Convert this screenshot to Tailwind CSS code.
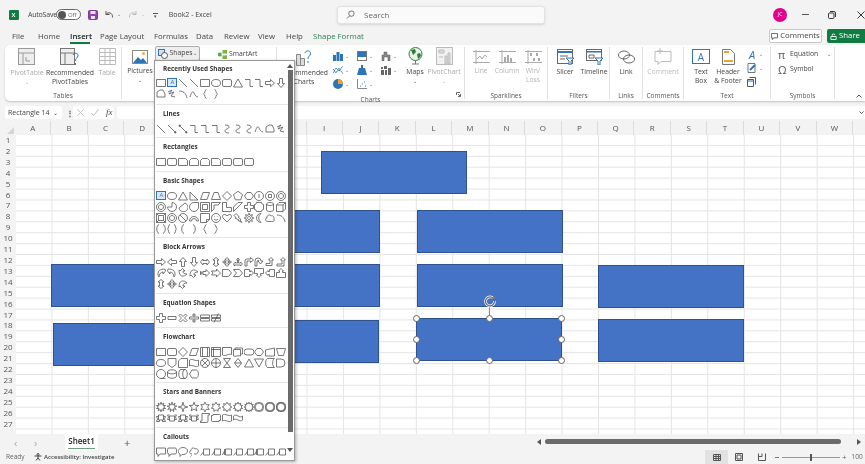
<!DOCTYPE html>
<html lang="en">
<head>
<meta charset="UTF-8" />
<title>Book2 - Excel</title>
<script src="https://cdn.jsdelivr.net/npm/@tailwindcss/browser@4"></script>
</head>
<body class="bg-[#f3f3f3]">
<div class="relative w-[865px] h-[464px] overflow-hidden bg-[#f3f3f3] text-[#444] font-['Open_Sans',sans-serif] text-[8px] leading-none flex flex-col blur-[0.3px]">

  <!-- title bar -->
  <div class="h-[29px] flex items-center shrink-0">
    <svg class="ml-[9px] w-[10px] h-[10px]" viewBox="0 0 10 10"><rect width="10" height="10" rx="1" fill="#107c41"/><path d="M3 3l3 4M6 3L3 7" stroke="#fff" fill="none"/></svg>
    <span class="ml-[9px] w-[28px] text-[7px] tracking-[-0.2px]">AutoSave</span>
    <div class="w-[25px] h-[11px] rounded-full border border-[#666] bg-white flex items-center px-[1px]">
      <span class="w-[8px] h-[8px] rounded-full bg-[#555]"></span><span class="ml-[2px] text-[6px] text-[#666]">Off</span>
    </div>
    <svg class="ml-[7px] w-[10px] h-[10px]" viewBox="0 0 10 10"><rect x=".5" y=".5" width="9" height="9" rx="1" fill="#8e44ad" stroke="#7a3a98"/><rect x="2.5" y="1" width="5" height="3" fill="#efe3f5"/><rect x="3" y="6" width="4" height="3" fill="#efe3f5"/></svg>
    <svg class="ml-[6px] w-[10px] h-[10px]" viewBox="0 0 10 10" fill="none" stroke="#555"><path d="M2 1v3.5h3.5M2 4.5c2-3 7-2 6.500 3"/></svg>
    <span class="ml-[3px] text-[5px] text-[#666]">⌄</span>
    <svg class="ml-[7px] w-[10px] h-[10px]" viewBox="0 0 10 10" fill="none" stroke="#bbb"><path d="M8 1v3.500H4.500M8 4.500c-2-3-7-2-6.500 3"/></svg>
    <span class="ml-[3px] text-[5px] text-[#bbb]">⌄</span>
    <span class="ml-[8px] w-[5px] h-[4px] border-t border-[#555] text-[5px] text-center text-[#555]">▾</span>
    <span class="ml-[11px] w-[129px] text-[7px]">Book2 - Excel</span>
    <div class="ml-[40px] w-[209px] h-[18px] bg-[#fafafa] border border-[#e2e2e2] rounded-[3px] flex items-center shadow-sm">
      <svg class="ml-[8px] w-[9px] h-[9px]" viewBox="0 0 10 10" fill="none" stroke="#666"><circle cx="6" cy="4" r="3"/><path d="M4 6.500L1 9.500"/></svg>
      <span class="ml-[9px] text-[8px] text-[#666]">Search</span>
    </div>
    <div class="ml-[228px] w-[14px] h-[14px] rounded-full bg-[#e3008c] text-white text-[5px] flex items-center justify-center">JC</div>
    <span class="ml-[15px] w-[7px] border-t border-[#555]"></span>
    <svg class="ml-[19px] w-[8px] h-[8px]" viewBox="0 0 8 8" fill="none" stroke="#333"><rect x=".5" y="2" width="5.500" height="5.500" rx="1"/><path d="M2 .5h4a1.500 1.500 0 0 1 1.500 1.500v4"/></svg>
    <svg class="ml-[21px] w-[8px] h-[8px]" viewBox="0 0 8 8" fill="none" stroke="#333"><path d="M.5 .5l7 7M7.500 .5l-7 7"/></svg>
  </div>

  <!-- tabs -->
  <div class="h-[16px] shrink-0 flex items-center pl-[12px] text-[7.800px] relative">
    <span class="w-[26px]">File</span>
    <span class="w-[32px]">Home</span>
    <span class="w-[30px] font-semibold text-[#222] h-[16px] leading-[14px] relative">Insert<span class="absolute left-0 w-[20px] bottom-[1px] h-[2px] bg-[#107c41]"></span></span>
    <span class="w-[54px]">Page Layout</span>
    <span class="w-[42px]">Formulas</span>
    <span class="w-[28px]">Data</span>
    <span class="w-[34px]">Review</span>
    <span class="w-[28px]">View</span>
    <span class="w-[27px]">Help</span>
    <span class="text-[#2e7d55]">Shape Format</span>
    <div class="ml-auto mr-[5px] w-[53px] h-[14px] -mt-[2px] bg-white border border-[#c8c8c8] rounded-[2px] flex items-center justify-center">
      <svg class="w-[7px] h-[7px] mr-[2px]" viewBox="0 0 8 8" fill="none" stroke="#555"><path d="M.5 .5h7v5H3L1.500 7.500v-2h-1z"/></svg>Comments
    </div>
    <div class="w-[38px] h-[14px] -mt-[2px] bg-[#107c41] rounded-l-[2px] text-white flex items-center pl-[3px]">
      <svg class="w-[7px] h-[7px] mr-[2px]" viewBox="0 0 8 8" fill="none" stroke="#fff"><path d="M1 4h6v3.500H1zM2.500 4V2.500a1.500 1.500 0 0 1 3 0"/></svg>Share
    </div>
  </div>

  <!-- ribbon -->
  <div class="h-[56px] shrink-0 ml-[5px] bg-white rounded-l-[5px] shadow-[0_1px_2px_rgba(0,0,0,0.2)] flex text-[6.800px] text-[#555] text-center">
    <!-- Tables -->
    <div class="w-[117px] flex flex-col border-r border-[#e0e0e0] my-[2px]">
      <div class="flex-1 flex pl-[3px] pt-[1px]">
        <div class="w-[38px] flex flex-col items-center text-[#aaa]">
          <svg class="w-[18px] h-[18px]" viewBox="0 0 18 18" fill="#eee" stroke="#999"><rect x=".5" y=".5" width="16" height="16"/><path d="M.5 5h16M5 5v12M8 9v4h4" fill="none"/></svg>
          <span class="mt-[4px]">PivotTable</span><span class="mt-[3px] text-[5px]">⌄</span>
        </div>
        <div class="w-[48px] flex flex-col items-center text-[#444]">
          <svg class="w-[20px] h-[18px]" viewBox="0 0 20 18" fill="none" stroke="#777"><rect x=".5" y=".5" width="14" height="16" fill="#eee"/><path d="M.5 5h14M5 5v12"/><path d="M13 7c1-3 6-2 5 1-.5 2-2.500 2-2.500 5M15.500 15v2" stroke="#2e75b6"/></svg>
          <span class="mt-[4px] whitespace-nowrap">Recommended</span><span class="mt-[2px]">PivotTables</span>
        </div>
        <div class="w-[26px] flex flex-col items-center text-[#aaa]">
          <svg class="w-[17px] h-[17px]" viewBox="0 0 17 17" fill="none" stroke="#bbb"><path d="M.5 .5h16v16H.5zM.5 4.500h16M.5 8.500h16M.5 12.500h16M6 .5v16M11 .5v16"/></svg>
          <span class="mt-[5px]">Table</span>
        </div>
      </div>
      <span class="h-[12px] leading-[17px] text-[6.500px]">Tables</span>
    </div>
    <!-- Illustrations, mostly under the open menu -->
    <div class="w-[155px] flex flex-col border-r border-[#e0e0e0] my-[2px]">
      <div class="flex-1 flex">
        <div class="ml-[3px] w-[30px] flex flex-col items-center text-[#444] pt-[3px]">
          <svg class="w-[16px] h-[14px]" viewBox="0 0 16 14"><rect x=".5" y=".5" width="15" height="13" fill="#fff" stroke="#888"/><path d="M1 13l5-6 3 3 2-2 4 5z" fill="#2e75b6"/><circle cx="11.500" cy="3.500" r="1.500" fill="#f0b429"/></svg>
          <span class="mt-[4px]">Pictures</span><span class="mt-[3px] text-[5px]">⌄</span>
        </div>
        <div class="w-[45px] h-[15px] -mt-[1px] border border-[#aaa] bg-[#eee] rounded-[2px] flex items-center justify-center text-[#444]">
          <svg class="w-[10px] h-[10px] mr-[2px]" viewBox="0 0 10 10" fill="none" stroke="#2e75b6"><rect x=".5" y=".5" width="6" height="6" fill="#cfe2f3"/><circle cx="6.500" cy="6.500" r="3" fill="#fff" stroke="#555"/></svg>Shapes <span class="ml-[1px] text-[5px]">⌄</span>
        </div>
        <div class="ml-[18px] h-[14px] flex items-center text-[#444]">
          <svg class="w-[9px] h-[9px] mr-[2px]" viewBox="0 0 10 10"><rect x="0" y="3" width="4" height="4" fill="#4caf50"/><rect x="5" y="0" width="5" height="4" fill="#7cb342"/><rect x="5" y="6" width="5" height="4" fill="#7cb342"/></svg>SmartArt
        </div>
      </div>
      <span class="h-[12px]"></span>
    </div>
    <!-- Charts -->
    <div class="w-[188px] flex flex-col border-r border-[#e0e0e0] my-[2px] relative">
      <div class="flex-1 flex">
        <div class="w-[54px] flex flex-col items-center text-[#444] pt-[2px]">
          <svg class="w-[16px] h-[17px]" viewBox="0 0 16 17" fill="none" stroke="#888"><path d="M.5 5.500h4v11h-4zM4.500 9.500h4v7h-4z" fill="#ddd"/><path d="M9 4c.5-3 6-3 5.500 1-.2 2-2.500 2-2.500 5M12 12v2" stroke="#2e75b6"/></svg>
          <span class="mt-[4px] whitespace-nowrap">Recommended</span><span class="mt-[2px]">Charts</span>
        </div>
        <div class="w-[72px] grid grid-cols-3 auto-rows-[14px] pt-[2px] text-[5px] text-[#666]">
          <div class="flex items-center pl-[2px]"><svg class="w-[10px] h-[10px] mr-[2px]" viewBox="0 0 10 10" fill="#2e75b6"><path d="M0 4h3v6H0zM3.500 1h3v9h-3zM7 3h3v7H7z"/></svg>⌄</div>
          <div class="flex items-center pl-[2px]"><svg class="w-[10px] h-[10px] mr-[2px]" viewBox="0 0 10 10"><rect x=".5" y=".5" width="9" height="9" fill="#fff" stroke="#777"/><path d="M1 1h8v5H1z" fill="#2e75b6"/></svg>⌄</div>
          <div class="flex items-center pl-[2px]"><svg class="w-[10px] h-[10px] mr-[2px]" viewBox="0 0 10 10" fill="#888" stroke="#555" stroke-width=".5"><path d="M1 10V4h2V1h3v3h3v6H7V6H3v4z"/></svg>⌄</div>
          <div class="flex items-center pl-[2px]"><svg class="w-[10px] h-[10px] mr-[2px]" viewBox="0 0 10 10" fill="none" stroke="#2e75b6"><path d="M0 8l3-5 3 3 4-5M0 4l3 4 3-5 4 6" stroke-dasharray="1.500 .5"/></svg>⌄</div>
          <div class="flex items-center pl-[2px]"><svg class="w-[10px] h-[10px] mr-[2px]" viewBox="0 0 10 10" fill="#2e75b6"><path d="M4 0h2v3h2l2 7H0l2-7h2z"/></svg>⌄</div>
          <div class="flex items-center pl-[2px]"><svg class="w-[10px] h-[10px] mr-[2px]" viewBox="0 0 10 10" fill="#666"><path d="M0 2h2v2H0zM3 1h3v3H3zM0 5h3v5H0zM4 5h2v5H4zM7 3h3v7H7z"/></svg>⌄</div>
          <div class="flex items-center pl-[2px]"><svg class="w-[10px] h-[10px] mr-[2px]" viewBox="0 0 10 10"><circle cx="5" cy="5" r="5" fill="#2e75b6"/><path d="M5 5V0a5 5 0 0 1 5 5z" fill="#f0a030"/></svg>⌄</div>
          <div class="flex items-center pl-[2px]"><svg class="w-[10px] h-[10px] mr-[2px]" viewBox="0 0 10 10" fill="none" stroke="#888"><path d="M.5 0v9.500H10"/><path d="M3 7h1M5 5h1M7 3h1M8 7h1" stroke="#2e75b6"/></svg>⌄</div>
        </div>
        <div class="w-[24px] flex flex-col items-center text-[#444]">
          <svg class="w-[15px] h-[18px]" viewBox="0 0 15 18"><circle cx="7.500" cy="7" r="6.500" fill="#e8f2e8" stroke="#3a7d44"/><path d="M3 3l4-1 1 3-3 3zM9 7l3-1 1 3-3 3z" fill="#2e7d32"/><path d="M4 17h7M7.500 13.500V17" stroke="#777" fill="none"/></svg>
          <span class="mt-[4px]">Maps</span><span class="mt-[3px] text-[5px]">⌄</span>
        </div>
        <div class="w-[34px] flex flex-col items-center text-[#aaa]">
          <svg class="w-[17px] h-[18px]" viewBox="0 0 17 18" fill="#ddd" stroke="#bbb"><rect x=".5" y=".5" width="16" height="17" fill="#f2f2f2"/><path d="M3 3h5v3H3zM9 9h2v8H9zM12 6h2v11h-2zM3 10h4" /></svg>
          <span class="mt-[4px]">PivotChart</span><span class="mt-[3px] text-[5px]">⌄</span>
        </div>
      </div>
      <span class="h-[12px] leading-[17px] text-[6.500px]">Charts</span>
      <svg class="absolute right-[3px] bottom-[2px] w-[5px] h-[5px]" viewBox="0 0 5 5" fill="none" stroke="#666"><path d="M.5 3V.5H4M2 2l2.500 2.500M4.500 2v2.500H2"/></svg>
    </div>
    <!-- Sparklines -->
    <div class="w-[83px] flex flex-col border-r border-[#e0e0e0] my-[2px]">
      <div class="flex-1 flex pl-[3px] pt-[3px] text-[#b5b5b5]">
        <div class="w-[26px] flex flex-col items-center"><svg class="w-[17px] h-[14px]" viewBox="0 0 17 14" fill="none" stroke="#aaa"><path d="M0 1.500h17M0 12.500h17M3 0v14"/><path d="M4 9l3-3 2 3 3-4 2 2"/></svg><span class="mt-[4px]">Line</span></div>
        <div class="w-[26px] flex flex-col items-center"><svg class="w-[17px] h-[14px]" viewBox="0 0 17 14" fill="none" stroke="#aaa"><path d="M0 1.500h17M0 12.500h17M3 0v14"/><path d="M6 12V7M9 12V5M12 12V8" stroke-width="2"/></svg><span class="mt-[4px]">Column</span></div>
        <div class="w-[26px] flex flex-col items-center"><svg class="w-[17px] h-[14px]" viewBox="0 0 17 14" fill="none" stroke="#aaa"><path d="M0 1.500h17M0 12.500h17M3 0v14"/><path d="M6 6V3M9 11V8M12 6V3M14 11V8" stroke-width="2"/></svg><span class="mt-[4px]">Win/</span><span class="mt-[2px]">Loss</span></div>
      </div>
      <span class="h-[12px] leading-[17px] text-[6.500px]">Sparklines</span>
    </div>
    <!-- Filters -->
    <div class="w-[62px] flex flex-col border-r border-[#e0e0e0] my-[2px]">
      <div class="flex-1 flex pl-[2px] pt-[2px] text-[#444]">
        <div class="w-[30px] flex flex-col items-center"><svg class="w-[17px] h-[16px]" viewBox="0 0 17 16" fill="none" stroke="#666"><rect x=".5" y=".5" width="15" height="14"/><path d="M1 2h14v2H1z" fill="#2e75b6" stroke="none"/><path d="M3 7h8M3 10h5"/><path d="M9 9h8l-3 3v4h-2v-4z" fill="#fff" stroke="#2e75b6"/></svg><span class="mt-[4px]">Slicer</span></div>
        <div class="w-[28px] flex flex-col items-center"><svg class="w-[17px] h-[16px]" viewBox="0 0 17 16" fill="none" stroke="#666"><rect x=".5" y=".5" width="15" height="11"/><path d="M1 2h14v1.500H1z" fill="#2e75b6" stroke="none"/><path d="M3 6h5v3H3z"/><path d="M9 9h8l-3 3v4h-2v-4z" fill="#fff" stroke="#2e75b6"/></svg><span class="mt-[4px]">Timeline</span></div>
      </div>
      <span class="h-[12px] leading-[17px] text-[6.500px]">Filters</span>
    </div>
    <!-- Links -->
    <div class="w-[33px] flex flex-col border-r border-[#e0e0e0] my-[2px]">
      <div class="flex-1 flex flex-col items-center pt-[2px] text-[#444]"><svg class="w-[17px] h-[16px]" viewBox="0 0 17 16" fill="none" stroke="#666"><ellipse cx="6" cy="6" rx="5.500" ry="4"/><ellipse cx="11" cy="10" rx="5.500" ry="4"/></svg><span class="mt-[4px]">Link</span></div>
      <span class="h-[12px] leading-[17px] text-[6.500px]">Links</span>
    </div>
    <!-- Comments -->
    <div class="w-[41px] flex flex-col border-r border-[#e0e0e0] my-[2px]">
      <div class="flex-1 flex flex-col items-center pt-[1px] text-[#bbb]"><svg class="w-[18px] h-[17px]" viewBox="0 0 18 17" fill="none" stroke="#bbb"><path d="M1 3.500h16v10H7l-3 3v-3H1zM6 0v6M3 3h6"/></svg><span class="mt-[4px]">Comment</span></div>
      <span class="h-[12px] leading-[17px] text-[6.500px]">Comments</span>
    </div>
    <!-- Text -->
    <div class="w-[87px] flex flex-col border-r border-[#e0e0e0] my-[2px]">
      <div class="flex-1 flex pl-[4px] pt-[2px] text-[#444]">
        <div class="w-[26px] flex flex-col items-center">
          <div class="w-[18px] h-[15px] border border-[#2e75b6] flex items-center justify-center text-[10px] text-[#2e75b6]">A</div>
          <span class="mt-[5px]">Text</span><span class="mt-[2px]">Box</span>
        </div>
        <div class="w-[28px] flex flex-col items-center">
          <svg class="w-[13px] h-[16px]" viewBox="0 0 13 16"><path d="M.5 .5h8l4 4v11H.5z" fill="#fff" stroke="#777"/><path d="M2 2h5v2H2zM2 11h9v2H2z" fill="#e9a23b"/></svg>
          <span class="mt-[4px]">Header</span><span class="mt-[2px] whitespace-nowrap">&amp; Footer</span>
        </div>
        <div class="ml-[5px] flex flex-col gap-[4px] text-[5px] text-[#666]">
          <div class="flex items-center h-[10px]"><span class="w-[10px] text-[11px] italic text-[#2e75b6]">A</span><span class="ml-[2px]">⌄</span></div>
          <div class="flex items-center h-[10px]"><svg class="w-[10px] h-[10px]" viewBox="0 0 10 10" fill="none" stroke="#2e75b6"><path d="M1 .5h7v9H1z" stroke="#777"/><path d="M3 7l5-5" stroke-width="2"/></svg><span class="ml-[2px]">⌄</span></div>
          <svg class="w-[9px] h-[10px]" viewBox="0 0 9 10" fill="none" stroke="#555"><path d="M.5 2.500h6v7h-6zM2.500 .5h6v7"/><path d="M1 4h5" stroke="#2e75b6"/></svg>
        </div>
      </div>
      <span class="h-[12px] leading-[17px] text-[6.500px]">Text</span>
    </div>
    <!-- Symbols -->
    <div class="w-[64px] flex flex-col border-r border-[#e0e0e0] my-[2px]">
      <div class="flex-1 flex flex-col pl-[7px] text-[#444] text-left">
        <div class="h-[14px] flex items-center"><span class="w-[12px] text-[11px] text-[#555]">π</span>Equation<span class="ml-[9px] text-[5px]">⌄</span></div>
        <div class="mt-[1px] h-[14px] flex items-center"><span class="w-[12px] text-[11px] text-[#555]">Ω</span>Symbol</div>
      </div>
      <span class="h-[12px] leading-[17px] text-[6.500px]">Symbols</span>
    </div>
    <div class="flex-1 flex items-end justify-end pr-[3px] pb-[3px]">
      <svg class="w-[6px] h-[4px]" viewBox="0 0 6 4" fill="none" stroke="#555"><path d="M.5 3.500L3 1l2.500 2.500"/></svg>
    </div>
  </div>

  <!-- formula bar -->
  <div class="h-[20px] shrink-0 flex items-center pl-[5px] pt-[3px]">
    <div class="w-[57px] h-[13px] bg-white rounded-[2px] flex items-center pl-[3px] text-[7px] whitespace-nowrap">Rectangle 14<span class="ml-[3px] text-[6px]">⌄</span></div>
    <span class="ml-[4px] w-[3px] text-[8px] font-bold text-[#555]">⋮</span>
    <div class="ml-[4px] w-[41px] h-[13px] bg-white rounded-[2px] flex items-center pl-[4px] gap-[7px]">
      <svg class="w-[7px] h-[7px]" viewBox="0 0 8 8" fill="none" stroke="#bbb"><path d="M.5 .5l7 7M7.500 .5l-7 7"/></svg>
      <svg class="w-[8px] h-[7px]" viewBox="0 0 8 7" fill="none" stroke="#bbb"><path d="M.5 4l2 2.500 5-6"/></svg>
      <span class="font-['Liberation_Serif',serif] italic text-[9px] text-[#444]">fx</span>
    </div>
    <div class="ml-[3px] flex-1 h-[13px] bg-white rounded-l-[2px] flex items-center justify-end pr-[1px]">
      <svg class="w-[5px] h-[3px]" viewBox="0 0 5 3" fill="none" stroke="#555"><path d="M.5 .5L2.500 2.500 4.500 .5"/></svg>
    </div>
  </div>

  <!-- column headers -->
  <div class="h-[14px] shrink-0 flex items-center text-[8px] text-[#555]">
    <div class="w-[15px] h-full flex items-end justify-end pb-[1px] pr-[1px]"><span class="w-0 h-0 border-l-[7px] border-l-transparent border-b-[7px] border-b-[#d6d6d6]"></span></div>
    <div class="flex" id="cols"></div>
  </div>

  <!-- sheet -->
  <div class="flex-1 flex min-h-0">
    <div class="w-[16px] shrink-0 overflow-hidden text-center text-[8px] text-[#555]" id="rows"></div>
    <div class="relative flex-1 bg-white bg-[linear-gradient(to_right,#e4e4e4_1px,transparent_1px),linear-gradient(to_bottom,#e4e4e4_1px,transparent_1px)] bg-[size:36.45px_10.92px] bg-[position:-1px_-1px]">
      <div class="absolute left-[305px] top-[16px] w-[146px] h-[43px] bg-[#4472c4] border border-[#2f528f]"></div>
      <div class="absolute left-[218px] top-[75px] w-[146px] h-[43px] bg-[#4472c4] border border-[#2f528f]"></div>
      <div class="absolute left-[401px] top-[75px] w-[146px] h-[43px] bg-[#4472c4] border border-[#2f528f]"></div>
      <div class="absolute left-[35px] top-[129px] w-[146px] h-[43px] bg-[#4472c4] border border-[#2f528f]"></div>
      <div class="absolute left-[218px] top-[129px] w-[146px] h-[43px] bg-[#4472c4] border border-[#2f528f]"></div>
      <div class="absolute left-[401px] top-[129px] w-[146px] h-[43px] bg-[#4472c4] border border-[#2f528f]"></div>
      <div class="absolute left-[582px] top-[130px] w-[146px] h-[43px] bg-[#4472c4] border border-[#2f528f]"></div>
      <div class="absolute left-[37px] top-[188px] w-[146px] h-[43px] bg-[#4472c4] border border-[#2f528f]"></div>
      <div class="absolute left-[217px] top-[185px] w-[146px] h-[43px] bg-[#4472c4] border border-[#2f528f]"></div>
      <div class="absolute left-[582px] top-[184px] w-[146px] h-[43px] bg-[#4472c4] border border-[#2f528f]"></div>
      <!-- selected shape -->
      <div class="absolute left-[400px] top-[183px] w-[146px] h-[43px] bg-[#4472c4] border border-[#2f528f]">
        <span class="absolute left-[-4px] top-[-4px] w-[7px] h-[7px] rounded-full bg-white border border-[#666]"></span>
        <span class="absolute left-[69px] top-[-4px] w-[7px] h-[7px] rounded-full bg-white border border-[#666]"></span>
        <span class="absolute right-[-4px] top-[-4px] w-[7px] h-[7px] rounded-full bg-white border border-[#666]"></span>
        <span class="absolute left-[-4px] top-[17px] w-[7px] h-[7px] rounded-full bg-white border border-[#666]"></span>
        <span class="absolute right-[-4px] top-[17px] w-[7px] h-[7px] rounded-full bg-white border border-[#666]"></span>
        <span class="absolute left-[-4px] bottom-[-4px] w-[7px] h-[7px] rounded-full bg-white border border-[#666]"></span>
        <span class="absolute left-[69px] bottom-[-4px] w-[7px] h-[7px] rounded-full bg-white border border-[#666]"></span>
        <span class="absolute right-[-4px] bottom-[-4px] w-[7px] h-[7px] rounded-full bg-white border border-[#666]"></span>
        <span class="absolute left-[72px] top-[-14px] w-[1px] h-[11px] bg-[#888]"></span>
        <svg class="absolute left-[66px] top-[-25px] w-[14px] h-[14px]" viewBox="0 0 14 14" fill="none"><path d="M10.500 4.500A4.500 4.500 0 1 0 11.500 7" stroke="#fff" stroke-width="2.600"/><path d="M10.500 4.500A4.500 4.500 0 1 0 11.500 7" stroke="#666" stroke-width="1.200"/><path d="M11 1.500v3.500H7.500" stroke="#666"/></svg>
      </div>
    </div>
  </div>

  <!-- sheet tabs -->
  <div class="h-[16px] shrink-0 flex items-center relative text-[8px]">
    <span class="ml-[14px] w-[20px] text-[11px] text-[#aaa]">‹</span>
    <span class="w-[31px] text-[11px] text-[#aaa]">›</span>
    <div class="w-[33px] h-[16px] bg-white font-semibold text-[#222] text-center leading-[13px] relative">Sheet1<span class="absolute left-[3px] right-[3px] bottom-[1px] h-[1px] bg-[#6d9e84]"></span></div>
    <span class="ml-[26px] text-[11px] text-[#555]">+</span>
    <svg class="absolute left-[537px] top-[5px] w-[4px] h-[6px]" viewBox="0 0 4 6" fill="#555"><path d="M4 0v6L0 3z"/></svg>
    <div class="absolute left-[545px] top-[5px] w-[296px] h-[5px] rounded-full bg-[#6a6a6a]"></div>
    <svg class="absolute left-[857px] top-[5px] w-[4px] h-[6px]" viewBox="0 0 4 6" fill="#555"><path d="M0 0v6l4-3z"/></svg>
  </div>

  <!-- status bar -->
  <div class="h-[14px] shrink-0 flex items-center text-[6.500px] text-[#666] whitespace-nowrap">
    <span class="ml-[6px] w-[28px]">Ready</span>
    <svg class="w-[8px] h-[8px] mr-[2px]" viewBox="0 0 8 8" fill="none" stroke="#444"><circle cx="4" cy="1.500" r="1"/><path d="M.5 3h7M4 3v2L2 7.500M4 5l2 2.500"/></svg>
    <span class="w-[71px] font-semibold text-[#444] text-[6px]">Accessibility: Investigate</span>
    <div class="ml-[590px] w-[23px] h-[14px] bg-[#e2e2e2] flex items-center justify-center shrink-0">
      <svg class="w-[8px] h-[7px]" viewBox="0 0 8 7" fill="none" stroke="#555"><path d="M.5 .5h7v6h-7zM.5 2.500h7M.5 4.500h7M3 .5v6M5.500 .5v6"/></svg>
    </div>
    <svg class="ml-[7px] w-[8px] h-[8px] shrink-0" viewBox="0 0 8 8" fill="none" stroke="#555"><path d="M.5 .5h7v7h-7zM2 2h4v4H2z"/></svg>
    <svg class="ml-[15px] w-[8px] h-[8px] shrink-0" viewBox="0 0 8 8" fill="none" stroke="#555"><path d="M.5 .5v7h7v-7M4 .5v3H.5"/></svg>
    <span class="ml-[9px] w-[4px] border-t border-[#777] shrink-0"></span>
    <div class="ml-[3px] w-[58px] border-t border-[#999] relative shrink-0"><span class="absolute left-[28px] top-[-4px] w-[2px] h-[7px] bg-[#555]"></span></div>
    <span class="ml-[2px] text-[8px]">+</span>
    <span class="ml-[5px]">100</span>
  </div>

  <!-- shapes menu -->
  <div class="absolute left-[154px] top-[60px] w-[141px] h-[401px] bg-white border border-[#999] shadow-[1px_1px_3px_rgba(0,0,0,0.3)] pl-[1px]">
    <div class="w-[133px] text-[#333]">
      <section class="h-[44px] border-b border-[#e6e6e6]">
        <h4 class="h-[16px] pl-[7px] flex items-center font-bold text-[6.400px]">Recently Used Shapes</h4>
        <div data-shapes="rect tbox line line rect ell rnd tri elb elb rar dar free scr arc crv lbr rbr"></div>
      </section>
      <section class="h-[33px] border-b border-[#e6e6e6]">
        <h4 class="h-[18px] pl-[7px] flex items-center font-bold text-[6.400px]">Lines</h4>
        <div data-shapes="line lna lnd elb elb elb crs crs crs crv free scr"></div>
      </section>
      <section class="h-[34px] border-b border-[#e6e6e6]">
        <h4 class="h-[18px] pl-[7px] flex items-center font-bold text-[6.400px]">Rectangles</h4>
        <div data-shapes="rect rnd snip snp2 snp2 snip rnd rnd rnd"></div>
      </section>
      <section class="h-[66px] border-b border-[#e6e6e6]">
        <h4 class="h-[18px] pl-[7px] flex items-center font-bold text-[6.400px]">Basic Shapes</h4>
        <div data-shapes="tbox ell tri rtri para trap dia pent hex hept oct dec don pie chord tear frame half lsh diag cross plaq can cube bevel don nos bla fold smi heart bolt sun moon cloud arc dbk dbr lbk rbk lbr rbr"></div>
      </section>
      <section class="h-[56px] border-b border-[#e6e6e6]">
        <h4 class="h-[18px] pl-[7px] flex items-center font-bold text-[6.400px]">Block Arrows</h4>
        <div data-shapes="rar lar uar dar lrar udar quad lur bent uturn lup bup curR curL curU curD str notch pentR chev rcal dcal lcal ucal udar quad curD"></div>
      </section>
      <section class="h-[34px] border-b border-[#e6e6e6]">
        <h4 class="h-[18px] pl-[7px] flex items-center font-bold text-[6.400px]">Equation Shapes</h4>
        <div data-shapes="cross minus mul div eq neq"></div>
      </section>
      <section class="h-[55px] border-b border-[#e6e6e6]">
        <h4 class="h-[18px] pl-[7px] flex items-center font-bold text-[6.400px]">Flowchart</h4>
        <div data-shapes="rect rnd dia para predef inter doc multi term prep minp mop ell offp card tape sumj orj coll sort tri tridn stor delay seq mag drum disp"></div>
      </section>
      <section class="h-[45px] border-b border-[#e6e6e6]">
        <h4 class="h-[18px] pl-[7px] flex items-center font-bold text-[6.400px]">Stars and Banners</h4>
        <div data-shapes="exp1 exp2 st4 st5 st6 st7 st8 st10 st12 st16 st24 st32 rib rib2 rib rib2 scrl scrh wave dwav"></div>
      </section>
      <section>
        <h4 class="h-[18px] pl-[7px] flex items-center font-bold text-[6.400px]">Callouts</h4>
        <div data-shapes="rcl rrcl ocl ccl ln1 ln2 ln3 ln1 ln2 ln3 ln1 ln2"></div>
      </section>
    </div>
    <!-- menu scrollbar -->
    <div class="absolute right-[1px] top-0 bottom-0 w-[6px] flex flex-col items-center">
      <span class="mt-[3px] w-0 h-0 border-x-[3px] border-x-transparent border-b-[4px] border-b-[#555]"></span>
      <span class="mt-[2px] w-[5px] h-[362px] bg-[#6a6a6a]"></span>
      <span class="mt-[16px] w-0 h-0 border-x-[3px] border-x-transparent border-t-[4px] border-t-[#555]"></span>
    </div>
  </div>
</div>

<script>
  // column letters and row numbers
  const cols = document.getElementById("cols");
  "ABCDEFGHIJKLMNOPQRSTUVW".split("").forEach((c) => {
    const d = document.createElement("div");
    d.className = "w-[36.45px] h-[14px] shrink-0 flex items-center justify-center border-r border-[#dcdcdc]";
    d.textContent = c;
    cols.appendChild(d);
  });
  const rows = document.getElementById("rows");
  for (let i = 1; i <= 27; i++) {
    const d = document.createElement("div");
    d.className = "h-[10.92px] leading-[10.92px]";
    d.textContent = i;
    rows.appendChild(d);
  }

  function star(n, r1, r2) {
    let p = "";
    for (let i = 0; i < n * 2; i++) {
      const r = i % 2 ? r2 : r1;
      const a = (Math.PI * i) / n - Math.PI / 2;
      p += (i ? "L" : "M") + (5 + r * Math.cos(a)).toFixed(2) + " " + (5 + r * Math.sin(a)).toFixed(2);
    }
    return p + "z";
  }
  const ELL = "M.5 5a4.500 3.500 0 1 0 9 0a4.500 3.500 0 1 0-9 0z";
  const CIR = "M.5 5a4.500 4.500 0 1 0 9 0a4.500 4.500 0 1 0-9 0z";
  const S = {
    rect: "M.5 1.500h9v7h-9z", line: "M1 1l8 8", lna: "M1 1l8 8M9 9l-2-.5M9 9l-.5-2", lnd: "M1 1l8 8M1 1l2 .5M1 1l.5 2M9 9l-2-.5M9 9l-.5-2",
    ell: ELL, rnd: "M2 1.500h6a1.500 1.500 0 0 1 1.500 1.500v4a1.500 1.500 0 0 1-1.500 1.500H2A1.500 1.500 0 0 1 .5 7V3A1.500 1.500 0 0 1 2 1.500z",
    tri: "M5 1l4.500 8H.5z", rtri: "M1 1l8 8H1z", tridn: "M.5 1h9L5 9z", elb: "M1 1.500h5v7h3", crs: "M3 1c5 0 5 3 2 4s-3 4 2 4",
    rar: "M.5 3.500h5v-2l4 3.500-4 3.500v-2h-5z", lar: "M9.500 3.500h-5v-2l-4 3.500 4 3.500v-2h5z", uar: "M3.500 9.500v-5h-2l3.500-4 3.500 4h-2v5z", dar: "M3.500 .5v5h-2l3.500 4 3.500-4h-2v-5z",
    lrar: "M.5 5l2.500-3v1.500h4V2l2.500 3L7 8V6.500H3V8z", udar: "M5 .5l3 2.500H6.500v4H8l-3 2.500L2 7h1.500V3H2z", quad: "M5 .5l2 2H6v2h1.500v-1l2 1.500-2 1.500v-1H6v2h1l-2 2-2-2h1v-2H2.500v1l-2-1.500 2-1.500v1H4v-2H3z",
    lur: "M.5 7l2-2v1h2V3h-1l1.500-2 1.500 2h-1v3h2V5l2 2-2 2V8h-6v1z", bent: "M1 9V4a2 2 0 0 1 2-2h3.500V.5l3 2.500-3 2.500V4H3v5z", uturn: "M1 9V4a3 3 0 0 1 6 0h2L6.500 7 4 4h1a1.500 1.500 0 0 0-2 0v5z",
    lup: "M1 6.500h4V3H3.500L6 .5 8.500 3H7v5.500H1z", bup: "M1 9V7h5V3H4.500L7 .5 9.500 3H8v6z",
    curR: "M9 1C4 1 2 3 2 6c0 1 0 2 1 3 0-3 2-5 4-5v2l2.500-3z", curL: "M1 1c5 0 7 2 7 5 0 1 0 2-1 3 0-3-2-5-4-5v2L.5 3z", curU: "M1 2c0 5 2 6 4 6s3-1 4-2c-3 0-4-1-4-3h2L4.500 .5 2 3z", curD: "M1 8c0-5 2-6 4-6s3 1 4 2c-3 0-4 1-4 3h2l-2.500 2.500L2 7z",
    str: "M3 3.500h3v-2l3.500 3.500L6 8.500v-2H3zM.5 3.500h.5v3H.5zM2 3.500v3", notch: "M.5 3h5V1l4 4-4 4V7h-5l1.500-2z", pentR: "M.5 1.500h6l3 3.500-3 3.500h-6z", chev: "M.5 1.500h6l3 3.500-3 3.500h-6l3-3.500z",
    rcal: "M.5 1.500h5v2h1.500V2.500L9.500 5 7 7.500v-1H5.500v2h-5z", dcal: "M.5 .5h9v5h-3V7h1L5 9.500 2.500 7h1V5.500h-3z", lcal: "M9.500 1.500h-5v2H3v-1L.5 5 3 7.500v-1h1.500v2h5z", ucal: "M.5 9.500h9v-5h-3V3h1L5 .5 2.500 3h1v1.500h-3z",
    free: "M1 8V3l3-2h3l2 4v3z", scr: "M1 3l4-2-3 4 5-2-3 4 4 1", arc: "M1 2c4 0 7 2 8 7", crv: "M1 8c2-6 3-6 4-4s2 4 4 4",
    lbr: "M6.500 .5c-2 0-1 4-3 4.500 2 .5 1 4.500 3 4.500", rbr: "M3.500 .5c2 0 1 4 3 4.500-2 .5-1 4.500-3 4.500",
    lbk: "M6 .5c-3 1-3 8 0 9", rbk: "M4 .5c3 1 3 8 0 9", dbk: "M3 .5c-3 1-3 8 0 9M7 .5c3 1 3 8 0 9", dbr: "M3 .5c-2 0-1 4-2.500 4.500 1.500.5.5 4.500 2.500 4.500M7 .5c2 0 1 4 2.500 4.500-1.500.5-.5 4.500-2.500 4.500",
    snip: "M.5 1.500h7l2 2v5h-9z", snp2: "M2.500 1.500h5l2 2v5h-9v-5z",
    para: "M3 1.500h6.500L7 8.500H.5z", trap: "M3 1.500h4l2.500 7h-9z", dia: "M5 .5L9.500 5 5 9.500.5 5z", pent: star(5, 4.7, 3.8), hex: "M3 1.500h4L9.500 5 7 8.500H3L.5 5z",
    hept: CIR + "M5 3v4", oct: CIR + "M3.500 3.500h3v3h-3z", dec: CIR + "M5 2.500a2.500 2.500 0 1 0 .01 0z",
    don: CIR + "M5 2.500a2.500 2.500 0 1 0 .01 0z", pie: "M5 5V.5A4.500 4.500 0 1 1 .5 5z", chord: "M7 1a4.500 4.500 0 1 1-6 5z", tear: "M9.500 .5V5A4.500 4.500 0 1 1 5 .5z",
    frame: "M.5 .5h9v9h-9zM2.500 2.500v5h5v-5z", half: "M.5 .5h9L7 3H3v4L.5 9.500z", lsh: "M.5 .5h4v5h5v4h-9z", diag: "M.5 5L5 .5h4.500L.5 9.500z", cross: "M3.500 .5h3v3h3v3h-3v3h-3v-3h-3v-3h3z",
    plaq: "M2.500 .5h5a2 2 0 0 0 2 2v5a2 2 0 0 0-2 2h-5a2 2 0 0 0-2-2v-5a2 2 0 0 0 2-2z", can: "M1.500 2c0-2 7-2 7 0v6c0 2-7 2-7 0zM1.500 2c0 2 7 2 7 0", cube: "M.5 3L3 .5h6.500V7L7 9.500H.5zM.5 3H7v6.500M7 3L9.500 .5",
    bevel: "M.5 .5h9v9h-9zM2.500 2.500h5v5h-5zM.5 .5l2 2M9.500 .5l-2 2M.5 9.500l2-2M9.500 9.500l-2-2", nos: CIR + "M2 2l6 6", bla: "M.5 8a4.500 4.500 0 0 1 9 0H7.500a2.500 2.500 0 0 0-5 0z",
    fold: "M.5 .5h9v6l-3 3h-6zM9.500 6.500h-3v3", smi: CIR + "M3 6c1 1.500 3 1.500 4 0M3.500 3.500h.5M6 3.500h.5", heart: "M5 9L1 5C-1 2 3 0 5 3c2-3 6-1 4 2z", bolt: "M3 .5l3 3-1 .5 3 2.500-1 .5 2 2.500-4-2 1-.5-4-2 1-.5-2-2z",
    sun: star(8, 4.8, 2.8) + "M5 3.500a1.500 1.500 0 1 0 .01 0z", moon: "M7 .5a4.500 4.500 0 1 0 0 9 5.500 5.500 0 0 1 0-9z", cloud: "M2.500 8.500C0 8.500 0 5 2 5 1.500 2 5 1 6 3c2-1 3.500 1 3 3 1 2-1 3-2.500 2.500z",
    minus: "M1 3.500h8v3H1z", mul: "M2.500 1L5 3.500 7.500 1 9 2.500 6.500 5 9 7.500 7.500 9 5 6.500 2.500 9 1 7.500 3.500 5 1 2.500z", div: "M.5 4h9v2h-9zM4 1h2v2H4zM4 7h2v2H4z", eq: "M.5 2h9v2.500h-9zM.5 5.500h9V8h-9z", neq: "M.5 2h9v2.500h-9zM.5 5.500h9V8h-9zM3 9.500L7.500 .5",
    predef: "M.5 .5h9v9h-9zM2.500 .5v9M7.500 .5v9", inter: "M.5 .5h9v9h-9zM2.500 .5v9M.5 2.500h9", doc: "M.5 .5h9v7c-3-1.500-6 2.500-9 .5z", multi: "M.5 2.500h7v6.500c-2-1-5 1-7 0zM2 2.500V1h7.500v6H8M3.500 1L4 .5",
    term: "M3 2h4a3 3 0 0 1 0 6H3a3 3 0 0 1 0-6z", prep: "M3 1.500h4L9.500 5 7 8.500H3L.5 5z", minp: "M.5 3l9-2v8h-9z", mop: "M.5 1.500h9L7.500 8.500h-5z", offp: "M1 .5h8v6L5 9.500 1 6.500z", card: "M3 .5h6.500v9h-9V3z", tape: "M.5 2c3-2 6 2 9 0v6c-3 2-6-2-9 0z",
    sumj: CIR + "M2 2l6 6M8 2l-6 6", orj: CIR + "M5 .5v9M.5 5h9", coll: "M1.500 .5h7L1.500 9.500h7z", sort: "M5 .5L8.500 5 5 9.500 1.500 5zM1.500 5h7", stor: "M2.500 .5h7C7 2 7 8 9.500 9.500h-7C0 8 0 2 2.500 .5z", delay: "M.5 1h4.500a4 4 0 0 1 0 8H.5z",
    seq: CIR + "M5 9.500h4.500", mag: "M.5 3c0-3 9-3 9 0v4c0 3-9 3-9 0zM.5 3c0 2.500 9 2.500 9 0", drum: "M3 .5h4c3 0 3 9 0 9H3c-3 0-3-9 0-9zM7 .5c-3 0-3 9 0 9", disp: "M3 1h4.500c2.500 1 2.500 7 0 8H3L.5 5z",
    exp1: star(10, 4.8, 2.6), exp2: star(9, 4.9, 2.3), st4: star(4, 4.8, 1.5), st5: star(5, 4.9, 2), st6: star(6, 4.8, 2.6), st7: star(7, 4.8, 2.8), st8: star(8, 4.8, 3), st10: star(10, 4.8, 3), st12: star(12, 4.9, 3.2), st16: star(16, 5, 3.4), st24: star(24, 5, 3.6), st32: star(32, 5, 3.7),
    rib: "M2.500 2h5v5h-5zM2.500 3.500H.5L1.500 6 .5 8.500h3V7M7.500 3.500h2L8.500 6l1 2.500h-3V7", rib2: "M2.500 3h5v5h-5zM2.500 2H.5l1 2-1 2.500h2M7.500 2h2l-1 2 1 2.500h-2",
    scrl: "M2 .5h7.500v1.500H8v6a1.500 1.500 0 0 1-1.500 1.500h-6V8H2z", scrh: "M2 1.500h6.500a1 1 0 0 1 1 1v5H8v1H1.500a1 1 0 0 1-1-1v-5H2z", wave: "M.5 2c3-2 6 2 9 0v6c-3 2-6-2-9 0z", dwav: "M.5 3c3-3 6 3 9 0v4c-3 3-6-3-9 0z",
    rcl: "M.5 1h9v6H4L2 9.500V7H.5z", rrcl: "M2 1h6a1.500 1.500 0 0 1 1.500 1.500v3A1.500 1.500 0 0 1 8 7H4L2 9.500V7A1.500 1.500 0 0 1 .5 5.500v-3A1.500 1.500 0 0 1 2 1z", ocl: "M5 .5c6 0 6 7 0 7H4L2 9.500V7C-1 6 0 .5 5 .5z", ccl: "M3 7c-3 0-3-3-1-3.500C2 1 5 0 6 2c2-1 4 1 3 3 0 2-3 2-4 2M2.500 8.500h.5M1 9.500h.5",
    ln1: "M3.500 2h6v6h-6zM3.500 5L.5 8.500", ln2: "M3.500 2h6v6h-6zM3.500 4L2 7 .5 8", ln3: "M3.500 2h6v6h-6zM2.500 2v6M2.500 4L.5 8",
  };

  document.querySelectorAll("[data-shapes]").forEach((box) => {
    box.className = "grid grid-cols-[repeat(12,10.9px)] auto-rows-[11px]";
    box.dataset.shapes.split(" ").forEach((k) => {
      const cell = document.createElement("div");
      cell.className = "flex items-center justify-center";
      if (k === "tbox") {
        cell.innerHTML = '<div class="w-[10px] h-[9px] border border-[#2e75b6] bg-[#dbe8f5] text-[#2e75b6] text-[6px] leading-[7px] text-center">A</div>';
      } else {
        cell.innerHTML = `<svg class="w-[10px] h-[10px]" viewBox="0 0 10 10" fill="none" stroke="#555" stroke-width=".8"><path d="${S[k]}"/></svg>`;
      }
      box.appendChild(cell);
    });
  });
</script>
</body>
</html>
